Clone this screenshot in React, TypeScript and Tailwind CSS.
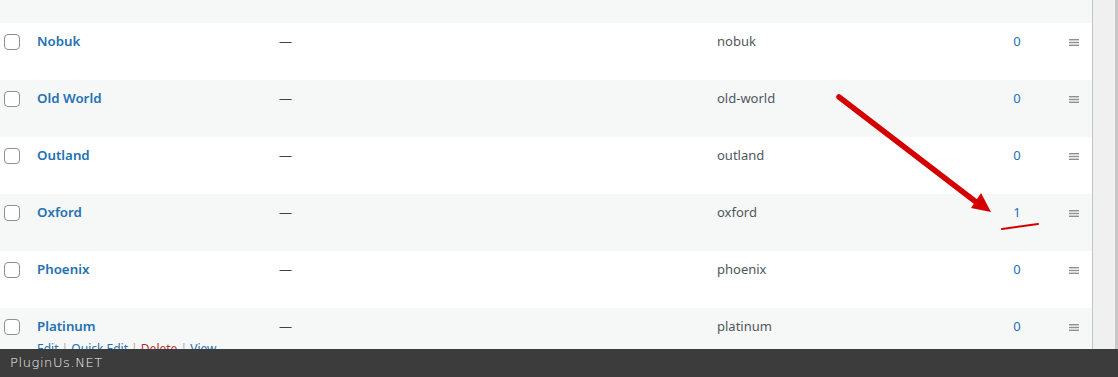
import React from 'react'

interface Term {
    name: string
    slug: string
    count: number
    actions?: boolean
}

const terms: Term[] = [
    { name: "Nobuk", slug: "nobuk", count: 0 },
    { name: "Old World", slug: "old-world", count: 0 },
    { name: "Outland", slug: "outland", count: 0 },
    { name: "Oxford", slug: "oxford", count: 1 },
    { name: "Phoenix", slug: "phoenix", count: 0 },
    { name: "Platinum", slug: "platinum", count: 0, actions: true },
]

function Handle() {
    return (
        <svg width="10" height="7" viewBox="0 0 10 7" className="block">
            <rect x="0" y="0" width="10" height="1.4" fill="#8c8f94" />
            <rect x="0" y="2.8" width="10" height="1.4" fill="#8c8f94" />
            <rect x="0" y="5.6" width="10" height="1.4" fill="#8c8f94" />
        </svg>
    )
}

function Row({ term, striped }: { term: Term; striped: boolean }) {
    return (
        <div className={`flex h-[57px] text-[13px] leading-[19px] ${striped ? "bg-[#f6f7f7]" : "bg-white"}`}>
            <div className="w-[37px] shrink-0 pl-[4px] pt-[11px]">
                <div className="w-4 h-4 rounded-[4px] border border-[#8c8f94] bg-white" />
            </div>
            <div className="w-[242px] shrink-0 pt-[9px]">
                <a className="font-semibold text-[#2271b1] text-[13.3px]">{term.name}</a>
                {term.actions && (
                    <div className="mt-[3px] text-[12px] text-[#2271b1]">
                        Edit<span className="text-[#a7aaad]"> | </span>Quick Edit<span className="text-[#a7aaad]"> | </span><span className="text-[#b32d2e]">Delete</span><span className="text-[#a7aaad]"> | </span>View
                    </div>
                )}
            </div>
            <div className="w-[438px] shrink-0 pt-[9px] text-[#3c434a]">—</div>
            <div className="w-[280px] shrink-0 pt-[9px] text-[#50575e]">{term.slug}</div>
            <div className="w-[40px] shrink-0 pt-[9px] text-center text-[#2271b1]">{term.count}</div>
            <div className="flex-1 pt-[16px] pl-[32px]">
                <Handle />
            </div>
        </div>
    )
}

export default function App() {
    return (
        <div className="relative w-[1118px] h-[377px] overflow-hidden bg-[#f0f0f1] flex" style={{ fontFamily: '"Noto Sans", "Open Sans", sans-serif' }}>
            <div className="w-[1093px] shrink-0 border-r border-[#c3c4c7] bg-white">
                <div className="h-[23px] bg-[#f6f7f7]" />
                {terms.map((t, i) => (
                    <Row key={t.slug} term={t} striped={i % 2 === 1} />
                ))}
            </div>
            <div className="flex-1" />
            <div className="w-[3px] bg-[#c8c8c8]" />

            <svg className="absolute left-0 top-0 pointer-events-none" width="1118" height="377">
                <line x1="839" y1="97" x2="976" y2="202" stroke="#d40000" strokeWidth="5.5" strokeLinecap="round" />
                <polygon points="991,212 981,193 971,208" fill="#d40000" />
                <line x1="1002" y1="229" x2="1038" y2="224" stroke="#d40000" strokeWidth="2" strokeLinecap="round" />
            </svg>

            <div className="absolute left-0 bottom-0 w-full h-[28px] bg-[#3c3c3c] flex items-center pl-[10px] text-[#f0f0f0] text-[13px] tracking-[0.6px] font-light" style={{ fontFamily: '"DejaVu Sans", sans-serif' }}>
                PluginUs.NET
            </div>
        </div>
    )
}
